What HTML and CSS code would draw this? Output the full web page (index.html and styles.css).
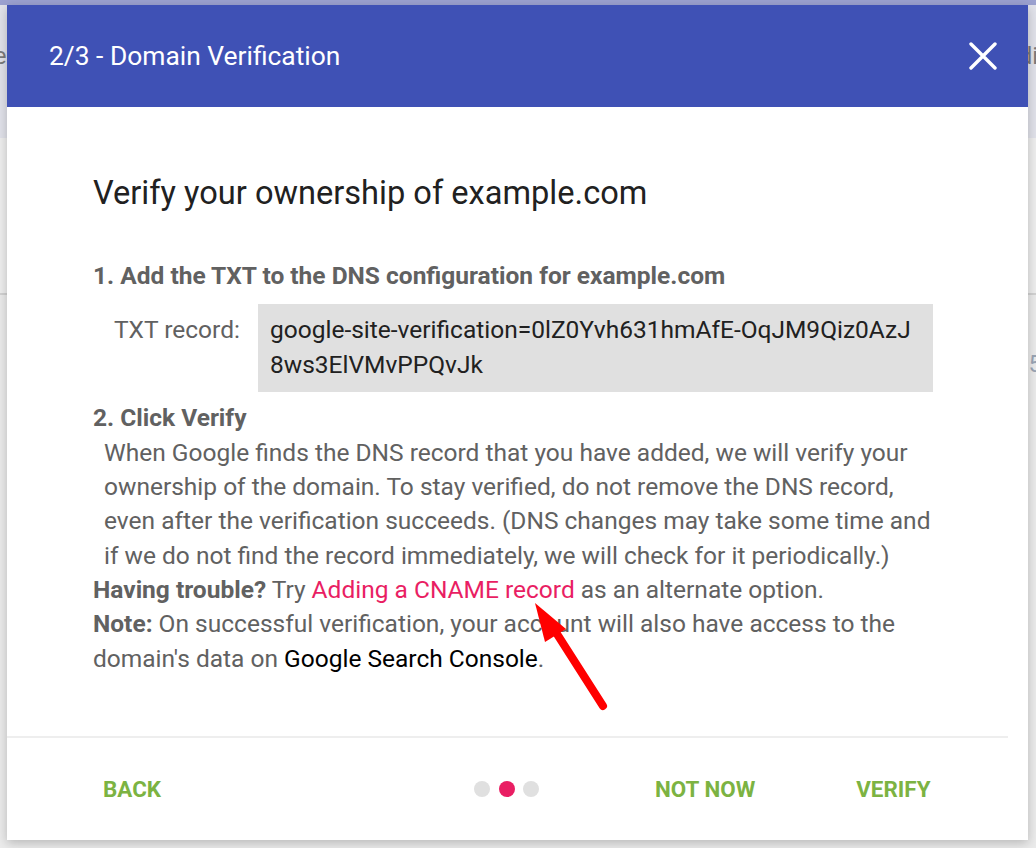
FILE: index.html
```html
<!DOCTYPE html>
<html lang="en">
<head>
<meta charset="utf-8">
<title>Domain Verification</title>
<link rel="stylesheet" href="styles.css">
</head>
<body>
<div class="page">
  <div class="page-top"></div>
  <div class="page-band">
    <span class="bg-text bg-left">Title</span>
    <span class="bg-text bg-right">Edit</span>
  </div>
  <div class="page-sub"></div>
  <div class="page-rest">
    <span class="bg-num">5</span>
  </div>
</div>

<div class="dialog">
  <header class="dialog-header">
    <h1 class="dialog-title">2/3 - Domain Verification</h1>
    <button class="close-btn" aria-label="Close">
      <svg width="28" height="28" viewBox="0 0 28 28"><path d="M2 2 L26 26 M26 2 L2 26" stroke="#fff" stroke-width="3.4" stroke-linecap="round" fill="none"/></svg>
    </button>
  </header>

  <main class="dialog-body">
    <h2 class="heading">Verify your ownership of example.com</h2>
    <div class="step-title">1. Add the TXT to the DNS configuration for example.com</div>
    <div class="record-row">
      <div class="record-label">TXT record:</div>
      <div class="record-value">google-site-verification=0lZ0Yvh631hmAfE-OqJM9Qiz0AzJ8ws3ElVMvPPQvJk</div>
    </div>
    <div class="step-title step-two">2. Click Verify</div>
    <p class="step-text">When Google finds the DNS record that you have added, we will verify your ownership of the domain. To stay verified, do not remove the DNS record, even after the verification succeeds. (DNS changes may take some time and if we do not find the record immediately, we will check for it periodically.)</p>
    <p class="note"><b>Having trouble?</b> Try <a class="link" href="#">Adding a CNAME record</a> as an alternate option.</p>
    <p class="note"><b>Note:</b> On successful verification, your account will also have access to the domain's data on <span class="dark">Google Search Console</span>.</p>
  </main>

  <div class="divider"></div>

  <footer class="dialog-footer">
    <button class="btn btn-back">Back</button>
    <div class="dots">
      <span class="dot"></span>
      <span class="dot active"></span>
      <span class="dot"></span>
    </div>
    <button class="btn btn-notnow">Not now</button>
    <button class="btn btn-verify">Verify</button>
  </footer>

  <svg class="arrow" width="1021" height="835" viewBox="0 0 1021 835">
    <line x1="596" y1="701" x2="543" y2="618" stroke="#ff0000" stroke-width="8" stroke-linecap="round"/>
    <polygon points="528,598 538,637 559,624" fill="#ff0000"/>
  </svg>
</div>
</body>
</html>
```

FILE: styles.css
```css
* { box-sizing: border-box; }

html, body {
  margin: 0;
  padding: 0;
  height: 100%;
  overflow: hidden;
}

body {
  background: #ebebeb;
  font-family: Roboto, "Liberation Sans", Arial, sans-serif;
}

.page {
  display: flex;
  flex-direction: column;
  height: 100%;
}

.page-top {
  height: 5px;
  background: #9ba1d0;
}

.page-band {
  height: 133px;
  background: #e1e2ea;
  display: flex;
  justify-content: space-between;
  align-items: center;
  padding-bottom: 32px;
}

.bg-text {
  font-size: 24px;
  color: #7a7a7a;
}

.bg-left { margin-left: -40px; }
.bg-right { margin-right: -10px; }

.page-sub {
  height: 157px;
  background: #eeeeee;
  border-bottom: 2px solid #d2d2d2;
}

.page-rest {
  flex: 1;
  background: #ebebeb;
  display: flex;
  justify-content: flex-end;
  padding-top: 55px;
}

.bg-num {
  font-size: 24px;
  color: #9aa5b5;
  margin-right: -6px;
}

.dialog {
  position: absolute;
  left: 7px;
  top: 5px;
  width: 1021px;
  height: 835px;
  background: #ffffff;
  box-shadow: 0 3px 10px rgba(0, 0, 0, 0.22);
  display: flex;
  flex-direction: column;
}

.dialog-header {
  height: 102px;
  flex: none;
  background: #3f51b5;
  display: flex;
  align-items: center;
  justify-content: space-between;
  padding: 0 31px 0 42px;
}

.dialog-title {
  margin: 0;
  font-size: 26.4px;
  font-weight: 400;
  color: #ffffff;
  line-height: 1;
}

.close-btn {
  border: 0;
  background: transparent;
  padding: 0;
  width: 28px;
  height: 28px;
  display: block;
}

.close-btn svg { display: block; }

.dialog-body {
  flex: 1;
  padding: 69px 95px 0 86px;
  font-size: 24.5px;
  line-height: 34.33px;
  color: #616161;
}

.heading {
  margin: 0 0 49px;
  font-size: 32.6px;
  font-weight: 400;
  line-height: 34px;
  color: #212121;
}

.step-title {
  font-weight: 700;
  color: #616161;
}

.record-row {
  display: flex;
  align-items: flex-start;
  margin-top: 11px;
}

.record-label {
  width: 165px;
  flex: none;
  padding-left: 21px;
  padding-top: 9px;
}

.record-value {
  flex: 1;
  background: #e0e0e0;
  color: #212121;
  padding: 9px 12px 10px;
  word-break: break-all;
  height: 88px;
}

.step-two { margin-top: 9px; }

.step-text {
  margin: 0;
  padding-left: 11px;
}

.note {
  margin: 0;
}

.note b {
  color: #616161;
}

.link {
  color: #e91e63;
  text-decoration: none;
}

.dark { color: #000000; }

.divider {
  flex: none;
  height: 2px;
  background: #eeeeee;
  margin-right: 20px;
}

.dialog-footer {
  flex: none;
  height: 102px;
  display: flex;
  align-items: center;
  padding-left: 96px;
}

.btn {
  border: 0;
  background: transparent;
  padding: 0;
  font-family: Roboto, "Liberation Sans", Arial, sans-serif;
  font-size: 22.4px;
  font-weight: 700;
  text-transform: uppercase;
  color: #7cb342;
  line-height: 1;
}

.dots {
  display: flex;
  gap: 8.5px;
  margin-left: 313px;
}

.dot {
  width: 16px;
  height: 16px;
  border-radius: 50%;
  background: #e0e0e0;
}

.dot.active { background: #e91e63; }

.btn-notnow { margin-left: 116px; }
.btn-verify { margin-left: 101px; }

.arrow {
  position: absolute;
  left: 0;
  top: 0;
  pointer-events: none;
}
```
